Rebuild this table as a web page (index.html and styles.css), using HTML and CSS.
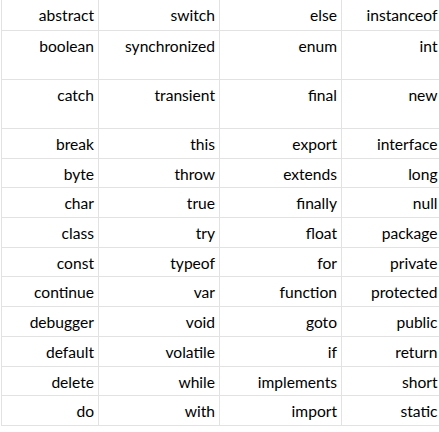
FILE: index.html
```html
<!DOCTYPE html>
<html>
<head>
<meta charset="utf-8">
<link rel="stylesheet" href="styles.css">
</head>
<body>
<table class="kw">
<colgroup><col class="c1"><col class="c2"><col class="c3"><col class="c4"></colgroup>
<tbody>
<tr class="r1"><td>abstract</td><td>switch</td><td>else</td><td>instanceof</td></tr>
<tr class="tall"><td>boolean</td><td>synchronized</td><td>enum</td><td>int</td></tr>
<tr class="tall"><td>catch</td><td>transient</td><td>final</td><td>new</td></tr>
<tr><td>break</td><td>this</td><td>export</td><td>interface</td></tr>
<tr><td>byte</td><td>throw</td><td>extends</td><td>long</td></tr>
<tr><td>char</td><td>true</td><td>finally</td><td>null</td></tr>
<tr><td>class</td><td>try</td><td>float</td><td>package</td></tr>
<tr><td>const</td><td>typeof</td><td>for</td><td>private</td></tr>
<tr><td>continue</td><td>var</td><td>function</td><td>protected</td></tr>
<tr><td>debugger</td><td>void</td><td>goto</td><td>public</td></tr>
<tr><td>default</td><td>volatile</td><td>if</td><td>return</td></tr>
<tr><td>delete</td><td>while</td><td>implements</td><td>short</td></tr>
<tr><td>do</td><td>with</td><td>import</td><td>static</td></tr>
</tbody>
</table>
</body>
</html>
```
FILE: styles.css
```css
html, body {
  margin: 0;
  padding: 0;
  background: #ffffff;
}
body {
  padding-left: 1px;
  overflow: hidden;
}
.kw {
  border-collapse: collapse;
  table-layout: fixed;
  width: 438px;
  margin-top: -1px;
  font-family: Lato, "Open Sans", sans-serif;
  font-size: 15.6px;
  color: #000;
}
.c1 { width: 97px; }
.c2 { width: 121px; }
.c3 { width: 122px; }
.c4 { width: 98px; }
.kw td {
  border: 1px solid #e2e2e2;
  text-align: right;
  vertical-align: top;
  padding: 6px 4px 0 0;
  line-height: 18px;
  height: 29.7px;
  box-sizing: border-box;
  white-space: nowrap;
  overflow: hidden;
}
.kw td:last-child {
  border-right: none;
  padding-right: 2px;
}
.kw tr.r1 td { height: 31px; }
.kw tr.tall td { height: 49px; }
```
